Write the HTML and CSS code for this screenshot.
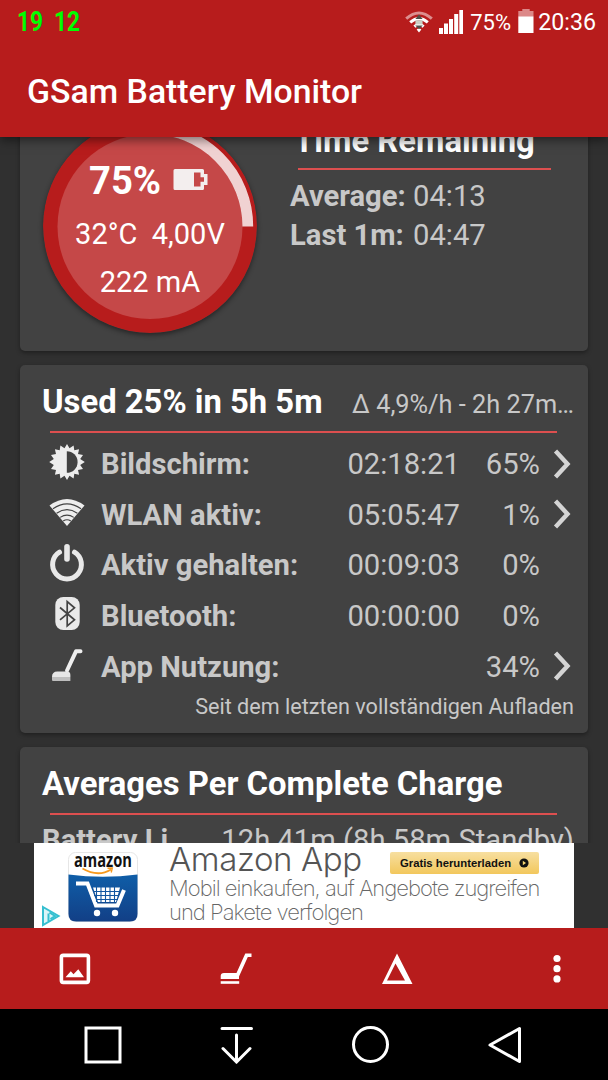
FILE: index.html
```html
<!DOCTYPE html>
<html lang="de">
<head>
    <meta charset="UTF-8">
    <meta name="viewport" content="width=device-width, initial-scale=1.0">
    <title>GSam Battery Monitor</title>
    <link rel="stylesheet" href="styles.css">
</head>
<body>
    <header class="app-header">
        <div class="status-bar">
            <svg class="notif" width="70" height="30" viewBox="0 0 70 30">
                <text x="0" y="24" textLength="26" lengthAdjust="spacingAndGlyphs">19</text>
                <text x="37" y="24" textLength="26" lengthAdjust="spacingAndGlyphs">12</text>
            </svg>
            <svg class="wifi" width="30" height="24" viewBox="0 0 30 24">
                <path d="M2.2 8.6Q15 -2.6 27.8 8.6" fill="none" stroke="#dc8e8e" stroke-width="3"/>
                <path d="M6.2 12.4Q15 4.8 23.8 12.4" fill="none" stroke="#fff" stroke-width="3"/>
                <path d="M10.4 16.6Q15 12.6 19.6 16.6" fill="none" stroke="#fff" stroke-width="3"/>
                <path d="M12.6 19.4Q15 17.4 17.4 19.4L15 22.4Z" fill="#fff"/>
                <path d="M15 4.6L18.6 9H11.4ZM11.2 15.6H18.8L15 19Z" fill="#4c5148"/>
                <rect x="11.4" y="10.2" width="7.2" height="4.2" fill="#c9d0c5"/>
            </svg>
            <svg class="signal" width="24" height="24" viewBox="0 0 24 24" fill="#fff">
                <rect x="0" y="18" width="4" height="6"/>
                <rect x="5" y="13.5" width="4" height="10.5"/>
                <rect x="10" y="9" width="4" height="15"/>
                <rect x="15.2" y="4" width="4" height="20"/>
                <rect x="20.3" y="0" width="3.7" height="24"/>
            </svg>
            <span class="status-pct">75%</span>
            <svg class="status-batt" width="16" height="24" viewBox="0 0 16 24">
                <path d="M4.3 0H11.7V2H15.5V7.3H0.3V2H4.3Z" fill="#dc8888"/>
                <rect x="0.3" y="7.3" width="15.2" height="16.7" fill="#fff"/>
            </svg>
            <span class="clock">20:36</span>
        </div>
        <h1>GSam Battery Monitor</h1>
    </header>

    <main class="scroller">
        <section class="card card-now">
            <div class="gauge">
                <svg class="gauge-ring" width="214" height="214" viewBox="0 0 214 214">
                    <circle cx="107" cy="107" r="107" fill="#b71c1c"/>
                    <circle cx="107" cy="107.5" r="92.5" fill="#c54848"/>
                    <path d="M107 9.7A97.8 97.8 0 0 1 204.8 107.5" fill="none" stroke="#f0d2d2" stroke-width="10.8"/>
                </svg>
                <div class="gauge-level">
                    <span>75%</span>
                    <svg width="35" height="21" viewBox="0 0 35 21">
                        <path fill-rule="evenodd" d="M2 0H29.5Q31 0 31 1.5V5H34.5V16H31V19.5Q31 21 29.5 21H2Q0.5 21 0.5 19.5V1.5Q0.5 0 2 0ZM21 3.5V17.5H27.5V12.7H31V8.3H27.5V3.5Z" fill="#f3eeee"/>
                    </svg>
                </div>
                <div class="gauge-line">32°C&nbsp; 4,00V</div>
                <div class="gauge-line">222 mA</div>
            </div>
            <div class="remaining">
                <h2>Time Remaining</h2>
                <hr>
                <dl>
                    <dt>Average:</dt><dd>04:13</dd>
                    <dt>Last 1m:</dt><dd>04:47</dd>
                </dl>
            </div>
        </section>

        <section class="card card-used">
            <div class="card-head">
                <h2>Used 25% in 5h 5m</h2>
                <span class="rate">Δ 4,9%/h - 2h 27m…</span>
            </div>
            <hr>
            <ul class="usage">
                <li>
                    <svg class="icon" width="38" height="38" viewBox="0 0 38 38">
                        <path fill="#ededed" d="M19 1L21.5 5.2L25.6 2.5L26.3 7.2L31.1 6.3L30 11.1L35 12L32.2 16.1L36.8 19L32.2 21.9L35 26L30 26.9L31.1 31.7L26.3 30.8L25.6 35.5L21.5 32.8L19 37L16.5 32.8L12.4 35.5L11.7 30.8L6.9 31.7L8 26.9L3 26L5.8 21.9L1.2 19L5.8 16.1L3 12L8 11.1L6.9 6.3L11.7 7.2L12.4 2.5L16.5 5.2Z"/>
                        <path fill="#424242" d="M18.8 8.2A10.8 10.8 0 0 1 18.8 29.8Z"/>
                    </svg>
                    <span class="name">Bildschirm:</span>
                    <span class="time">02:18:21</span>
                    <span class="pct">65%</span>
                    <svg class="chev" width="20" height="32" viewBox="0 0 20 32"><path d="M3.5 3L15.5 16L3.5 29"/></svg>
                </li>
                <li>
                    <svg class="icon" width="38" height="38" viewBox="0 0 38 38">
                        <path fill="#ededed" d="M1.5 11.5Q19 -1.5 36.5 11.5L19 32Z"/>
                        <path fill="none" stroke="#424242" stroke-width="1.1" d="M5 14.8Q19 5 33 14.8M8.6 19.2Q19 12 29.4 19.2M12.2 23.4Q19 18.8 25.8 23.4M15.2 27Q19 24.4 22.8 27"/>
                    </svg>
                    <span class="name">WLAN aktiv:</span>
                    <span class="time">05:05:47</span>
                    <span class="pct">1%</span>
                    <svg class="chev" width="20" height="32" viewBox="0 0 20 32"><path d="M3.5 3L15.5 16L3.5 29"/></svg>
                </li>
                <li>
                    <svg class="icon" width="38" height="38" viewBox="0 0 38 38" fill="none" stroke="#e8e8e8" stroke-linecap="round">
                        <path stroke-width="5" d="M11.5 8.2A14.4 14.4 0 1 0 26.5 8.2"/>
                        <path stroke-width="5.6" d="M19 2.8V15"/>
                    </svg>
                    <span class="name">Aktiv gehalten:</span>
                    <span class="time">00:09:03</span>
                    <span class="pct">0%</span>
                </li>
                <li>
                    <svg class="icon" width="38" height="38" viewBox="0 0 38 38">
                        <rect x="7.3" y="2" width="24.4" height="33" rx="8" fill="#e9e9e9"/>
                        <path fill="none" stroke="#424242" stroke-width="1.7" d="M12 12.5L26.5 24.8L19.2 31V6.5L26.5 12.8L12 24.8"/>
                    </svg>
                    <span class="name">Bluetooth:</span>
                    <span class="time">00:00:00</span>
                    <span class="pct">0%</span>
                </li>
                <li>
                    <svg class="icon" width="38" height="38" viewBox="0 0 38 38">
                        <path fill="none" stroke="#efefef" stroke-width="4" stroke-linecap="round" stroke-linejoin="round" d="M19 24.5L28 5.3H32.5"/>
                        <path fill="#e6e6e6" d="M4 31Q4 25.5 9.4 25.5H19.4Q22.4 25.5 22.4 29V31Z"/>
                        <path fill="#bebebe" d="M4 31H22.4V35H5Q4 35 4 34Z"/>
                    </svg>
                    <span class="name">App Nutzung:</span>
                    <span class="time"></span>
                    <span class="pct">34%</span>
                    <svg class="chev" width="20" height="32" viewBox="0 0 20 32"><path d="M3.5 3L15.5 16L3.5 29"/></svg>
                </li>
            </ul>
            <p class="since">Seit dem letzten vollständigen Aufladen</p>
        </section>

        <section class="card card-avg">
            <div class="card-head">
                <h2>Averages Per Complete Charge</h2>
            </div>
            <hr>
            <div class="avg-row">
                <b>Battery Li</b>
                <span>12h 41m (8h 58m Standby)</span>
            </div>
        </section>
    </main>

    <div class="ad-slot">
        <div class="ad">
            <svg class="ad-choices" width="20" height="22" viewBox="0 0 20 22">
                <path d="M2 2L17.5 11L2 20Z" fill="#d9f5f8" stroke="#35bfd0" stroke-width="2"/>
                <path d="M7.5 8.5V16M8.5 7.5L14 11L9.5 14" fill="none" stroke="#35bfd0" stroke-width="2"/>
            </svg>
            <svg class="ad-logo" width="70" height="70" viewBox="0 0 70 70">
                <defs>
                    <linearGradient id="blue" x1="0" y1="0" x2="0" y2="1">
                        <stop offset="0" stop-color="#0f5ea8"/>
                        <stop offset="1" stop-color="#123f86"/>
                    </linearGradient>
                </defs>
                <rect x="0.5" y="0.5" width="69" height="69" rx="7" fill="#fff" stroke="#e6e6e6"/>
                <path d="M0.5 22.5Q35 27 69.5 22.5V62Q69.5 69.5 62 69.5H8Q0.5 69.5 0.5 62Z" fill="url(#blue)"/>
                <text x="6" y="15" textLength="58" lengthAdjust="spacingAndGlyphs">amazon</text>
                <path d="M14.5 16.5Q30 25.5 43 17.5" fill="none" stroke="#f79a1e" stroke-width="1.8"/>
                <path d="M39.5 16.2L44.3 16L43.2 20.5" fill="none" stroke="#f79a1e" stroke-width="1.4"/>
                <path d="M8 31.5H19.5L28 53.5H49.5L56 38" fill="none" stroke="#fff" stroke-width="4"/>
                <path d="M25 35.5H52L48 50H30Z" fill="#fff"/>
                <path d="M28.500 35V50M33 35V50M37.500 35V50M42 35V50M46.500 35V50M25 39.500H52M26 43.500H51M28 47.500H50" stroke="#1256a0" stroke-width="1.1"/>
                <circle cx="29" cy="61" r="3.2" fill="#fff"/>
                <circle cx="47" cy="61" r="3.2" fill="#fff"/>
            </svg>
            <div class="ad-copy">
                <div class="ad-top">
                    <span class="ad-title">Amazon App</span>
                    <a class="ad-btn">Gratis herunterladen
                        <svg width="10" height="10" viewBox="0 0 10 10"><circle cx="5" cy="5" r="4.6" fill="#111"/><path d="M3.8 2.8L7 5L3.8 7.2Z" fill="#f5d572"/></svg>
                    </a>
                </div>
                <div class="ad-text">Mobil einkaufen, auf Angebote zugreifen</div>
                <div class="ad-text">und Pakete verfolgen</div>
            </div>
        </div>
    </div>

    <nav class="toolbar">
        <svg width="32" height="32" viewBox="0 0 32 32">
            <rect x="2.4" y="2.4" width="27" height="27" rx="1.8" fill="none" stroke="#fff" stroke-width="3.6"/>
            <path d="M6.5 24.3L11.8 18.3L14.5 21.3L19.3 16.3L25 24.3Z" fill="#fff"/>
        </svg>
        <svg width="32" height="32" viewBox="0 0 32 32" fill="#fff">
            <path d="M25.3 0.5H31.5V4H27.8L19 23.5V26H0.7V23Q0.7 20 4 20H16.5Z"/>
            <rect x="0.7" y="28.2" width="18.5" height="2.6"/>
        </svg>
        <svg width="32" height="32" viewBox="0 0 32 32" fill="#fff">
            <path fill-rule="evenodd" d="M16 0.5L31.5 31H1ZM14.500 10.500L6 27.600H24Z"/>
        </svg>
        <svg class="more" width="8" height="32" viewBox="0 0 8 32" fill="#fff">
            <circle cx="4" cy="5.5" r="3.6"/>
            <circle cx="4" cy="15.7" r="3.6"/>
            <circle cx="4" cy="25.9" r="3.6"/>
        </svg>
    </nav>

    <nav class="sys-nav">
        <svg width="38" height="38" viewBox="0 0 38 38"><rect x="2" y="2" width="34" height="34"/></svg>
        <svg width="38" height="38" viewBox="0 0 38 38" stroke-linecap="round"><path d="M4 2.5H33.5M18.5 9V36M5 22.5L18.5 36L32 22.5"/></svg>
        <svg width="38" height="38" viewBox="0 0 38 38"><circle cx="18.500" cy="18.500" r="17"/></svg>
        <svg width="38" height="38" viewBox="0 0 38 38" stroke-linejoin="round"><path d="M33.500 2.500V35.500L4 19Z"/></svg>
    </nav>
</body>
</html>
```
FILE: styles.css
```css
* {
    box-sizing: border-box;
}
body {
    margin: 0;
    height: 1080px;
    display: flex;
    flex-direction: column;
    overflow: hidden;
    background: #303030;
    color: #c8c8c8;
    font-family: Roboto, sans-serif;
    font-size: 29.2px;
}
svg {
    display: block;
    flex: none;
}
h1, h2, p, ul, dl, dd {
    margin: 0;
    padding: 0;
}
hr {
    height: 2px;
    border: none;
    margin: 0;
    background: #dd4f4f;
}

/* header */
.app-header {
    height: 137px;
    flex: none;
    background: #b71c1c;
    color: #fff;
    position: relative;
    z-index: 1;
    box-shadow: 0 3px 10px rgba(0,0,0,0.5);
}
.status-bar {
    height: 44px;
    display: flex;
    align-items: center;
    padding: 0 12px 0 17px;
}
.notif {
    margin-right: auto;
}
.notif text {
    fill: #00ff00;
    font-size: 27px;
    font-weight: 700;
}
.wifi {
    margin-right: 5px;
}
.signal {
    margin-right: 7px;
}
.status-pct {
    width: 41px;
    margin-right: 7px;
    font-size: 22px;
}
.status-batt {
    margin: -3px 4px 0 0;
}
.clock {
    font-size: 23.2px;
}
h1 {
    padding-left: 27px;
    font-size: 33.8px;
    font-weight: 500;
    line-height: 95px;
}

/* cards */
.scroller {
    height: 706px;
    flex: none;
    overflow: hidden;
    padding: 0 20px;
}
.card {
    background: #424242;
    border-radius: 5px;
    box-shadow: 0 2px 4px rgba(0,0,0,0.35);
    margin-bottom: 14px;
    padding-left: 22px;
}
.card h2 {
    color: #fff;
    font-size: 32.8px;
    font-weight: 700;
    line-height: 40px;
    white-space: nowrap;
}
.card-now {
    height: 254px;
    margin-top: -40px;
    padding-top: 22px;
    display: flex;
}
.gauge {
    position: relative;
    width: 214px;
    height: 214px;
    margin-left: 1px;
    padding-top: 38px;
    color: #fff;
    text-align: center;
}
.gauge-ring {
    position: absolute;
    top: 0;
    left: 0;
    border-radius: 50%;
    box-shadow: 0 2px 5px rgba(0,0,0,0.45);
}
.gauge-level {
    position: relative;
    display: flex;
    align-items: center;
    padding-left: 46px;
    gap: 12px;
    height: 48px;
    font-size: 38.2px;
    font-weight: 700;
}
.gauge-level svg {
    margin-top: -3px;
}
.gauge-line {
    position: relative;
    height: 48px;
    line-height: 59px;
    font-size: 29px;
}
.remaining {
    margin-left: 33px;
}
.remaining h2 {
    padding: 2px 0 0 4px;
}
.remaining hr {
    width: 253px;
    margin: 7px 0 7px 8px;
}
.remaining dl {
    display: grid;
    grid-template-columns: 123px auto;
    line-height: 39px;
}
.remaining dt, .name, .avg-row b {
    font-weight: 700;
}
.card-used {
    height: 368px;
    padding-top: 17px;
}
.card-head {
    display: flex;
    justify-content: space-between;
    align-items: baseline;
    padding-right: 14px;
}
.rate {
    font-size: 25.3px;
}
.card-used hr, .card-avg hr {
    width: 507px;
    margin: 9px 0 0 8px;
}
.usage {
    list-style: none;
    padding-top: 6px;
}
.usage li {
    height: 50.6px;
    display: flex;
    align-items: center;
}
.icon {
    margin: -4px 15px 0 6px;
}
.name {
    width: 230px;
}
.time {
    width: 129px;
    text-align: right;
}
.pct {
    width: 80px;
    text-align: right;
}
.chev {
    margin: -1px 0 0 12px;
    fill: none;
    stroke: #d4d4d4;
    stroke-width: 4.4;
}
.since {
    padding: 1px 14px 0 0;
    font-size: 21.6px;
    line-height: 27px;
    text-align: right;
}
.card-avg {
    height: 200px;
    padding-top: 17px;
}
.avg-row {
    display: flex;
    justify-content: space-between;
    padding: 5px 14px 0 0;
    line-height: 40px;
}

/* ad banner */
.ad-slot {
    height: 85px;
    flex: none;
    padding: 0 34px;
}
.ad {
    height: 85px;
    display: flex;
    background: #fff;
    overflow: hidden;
}
.ad-choices {
    margin: 62px 0 0 7px;
}
.ad-logo {
    margin: 9px 0 0 7px;
}
.ad-logo text {
    font-family: "Open Sans", sans-serif;
    font-size: 20px;
    font-weight: 700;
    fill: #111;
}
.ad-copy {
    margin-left: 31px;
    font-family: Inter, sans-serif;
    font-weight: 300;
    white-space: nowrap;
}
.ad-top {
    display: flex;
    width: 370px;
    height: 33px;
    justify-content: space-between;
}
.ad-title {
    font-size: 33px;
    line-height: 33px;
    letter-spacing: -0.4px;
    color: #555;
}
.ad-btn {
    height: 22px;
    width: 149px;
    margin-top: 9px;
    display: flex;
    align-items: center;
    justify-content: space-between;
    padding: 0 10px;
    border-radius: 2px;
    background: linear-gradient(#f7dfa0, #f2c75c);
    font-family: "Liberation Sans", sans-serif;
    font-size: 11.3px;
    font-weight: 700;
    color: #111;
}
.ad-text {
    font-size: 22px;
    line-height: 24px;
    font-weight: 200;
    letter-spacing: -0.98px;
    color: #666;
}

/* bottom bars */
.toolbar {
    height: 81px;
    flex: none;
    display: flex;
    gap: 129px;
    align-items: center;
    padding: 0 48px 0 59px;
    background: #b71c1c;
}
.more {
    margin-left: 11px;
}
.sys-nav {
    height: 71px;
    flex: none;
    display: flex;
    justify-content: space-between;
    align-items: center;
    padding: 0 84px;
    background: #000;
}
.sys-nav svg {
    fill: none;
    stroke: #fff;
    stroke-width: 3;
}
```
